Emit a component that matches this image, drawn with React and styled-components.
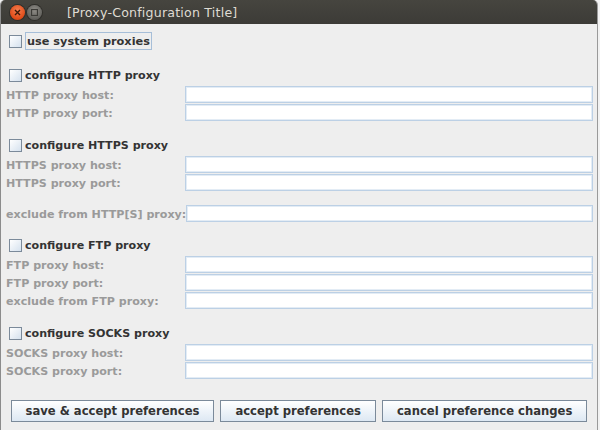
import React from "react"
import styled, { createGlobalStyle } from "styled-components"

const GlobalStyle = createGlobalStyle`
  html, body {
    margin: 0;
    padding: 0;
    background: #f2f2f2;
  }
  body {
    width: 600px;
    height: 430px;
    overflow: hidden;
  }
`

const Window = styled.div`
  width: 598px;
  height: 430px;
  display: flex;
  flex-direction: column;
  border-left: 1px solid #8c8c8c;
  border-right: 1px solid #9a9a9a;
  box-sizing: border-box;
  background: #eeeeee;
  border-radius: 5px 5px 0 0;
  overflow: hidden;
`

const TitleBar = styled.div`
  height: 24px;
  flex: none;
  display: flex;
  align-items: center;
  background: linear-gradient(#46453f, #3c3b37);
  padding-left: 9px;
  gap: 2px;
`

const WinButton = styled.span`
  width: 15px;
  height: 15px;
  border-radius: 50%;
  display: flex;
  align-items: center;
  justify-content: center;
  background: ${(p) =>
    p.close
      ? "radial-gradient(circle at 50% 35%, #f57d50, #df4a16 70%, #b83a10)"
      : "radial-gradient(circle at 50% 35%, #8e8c86, #5f5e5a 75%)"};
  box-shadow: 0 0 0 1px #2f2e2a;
`

const Title = styled.span`
  margin-left: 23px;
  color: #dfdbd2;
  font-family: "DejaVu Sans", sans-serif;
  font-size: 12.6px;
  letter-spacing: 0.2px;
`

const Body = styled.div`
  flex: 1;
  display: flex;
  flex-direction: column;
  padding: 8px 4px 0 4px;
  font-family: "DejaVu Sans", sans-serif;
  font-weight: bold;
  font-size: 11.1px;
`

const CheckRow = styled.label`
  height: 18px;
  display: flex;
  align-items: center;
  gap: 3px;
  padding-left: 4px;
  color: #333333;
  font-size: ${(p) => (p.big ? "11.3px" : "11.1px")};
`

const Box = styled.span`
  width: 11px;
  height: 11px;
  flex: none;
  border: 1px solid #7b8a9a;
  background: linear-gradient(135deg, #ffffff, #d5e1ee);
`

const Focus = styled.span`
  height: 16px;
  display: flex;
  align-items: center;
  padding: 0 1px;
  border: 1px solid #a6bed8;
`

const Section = styled.div`
  margin-top: ${(p) => p.top}px;
  display: flex;
  flex-direction: column;
`

const Grid = styled.div`
  margin-top: ${(p) => (p.flush ? 0 : 2)}px;
  display: grid;
  grid-template-columns: minmax(180px, max-content) 1fr;
  grid-auto-rows: 18px;
`

const FieldLabel = styled.span`
  display: flex;
  align-items: center;
  padding-left: 1px;
  color: #9a9a9a;
  white-space: nowrap;
`

const Field = styled.span`
  display: block;
  height: 17px;
  box-sizing: border-box;
  background: #ffffff;
  border: 1px solid #bcd0e5;
  box-shadow: inset 0 0 0 1px #e3ecf5;
`

const ButtonBar = styled.div`
  margin-top: 20px;
  display: flex;
  gap: 6px;
  padding-left: 6px;
`

const Button = styled.button`
  height: 22px;
  padding: 0 ${(p) => p.pad}px;
  border: 1px solid #7b8a9a;
  background: linear-gradient(#ffffff, #dde8f3);
  color: #333333;
  font-family: "DejaVu Sans", sans-serif;
  font-weight: bold;
  font-size: 11.6px;
`

const FieldRows = ({ labels, flush }) => (
  <Grid flush={flush}>
    {labels.map((l) => (
      <React.Fragment key={l}>
        <FieldLabel>{l}</FieldLabel>
        <Field />
      </React.Fragment>
    ))}
  </Grid>
)

export default function App() {
  return (
    <>
      <GlobalStyle />
      <Window>
        <TitleBar>
          <WinButton close>
            <svg width="7" height="7" viewBox="0 0 7 7">
              <path d="M1 1L6 6M6 1L1 6" stroke="#3a1a0a" strokeWidth="1.4" />
            </svg>
          </WinButton>
          <WinButton>
            <svg width="7" height="7" viewBox="0 0 7 7">
              <rect x="0.5" y="0.5" width="6" height="6" fill="none" stroke="#3c3b37" strokeWidth="1.2" />
            </svg>
          </WinButton>
          <Title>[Proxy-Configuration Title]</Title>
        </TitleBar>
        <Body>
          <CheckRow big>
            <Box />
            <Focus>use system proxies</Focus>
          </CheckRow>

          <Section top={16}>
            <CheckRow>
              <Box />
              configure HTTP proxy
            </CheckRow>
            <FieldRows labels={["HTTP proxy host:", "HTTP proxy port:"]} />
          </Section>

          <Section top={14}>
            <CheckRow>
              <Box />
              configure HTTPS proxy
            </CheckRow>
            <FieldRows labels={["HTTPS proxy host:", "HTTPS proxy port:"]} />
          </Section>

          <Section top={13}>
            <FieldRows flush labels={["exclude from HTTP[S] proxy:"]} />
          </Section>

          <Section top={13}>
            <CheckRow>
              <Box />
              configure FTP proxy
            </CheckRow>
            <FieldRows labels={["FTP proxy host:", "FTP proxy port:", "exclude from FTP proxy:"]} />
          </Section>

          <Section top={14}>
            <CheckRow>
              <Box />
              configure SOCKS proxy
            </CheckRow>
            <FieldRows labels={["SOCKS proxy host:", "SOCKS proxy port:"]} />
          </Section>

          <ButtonBar>
            <Button pad={13.5}>save &amp; accept preferences</Button>
            <Button pad={14.5}>accept preferences</Button>
            <Button pad={13.5}>cancel preference changes</Button>
          </ButtonBar>
        </Body>
      </Window>
    </>
  )
}
